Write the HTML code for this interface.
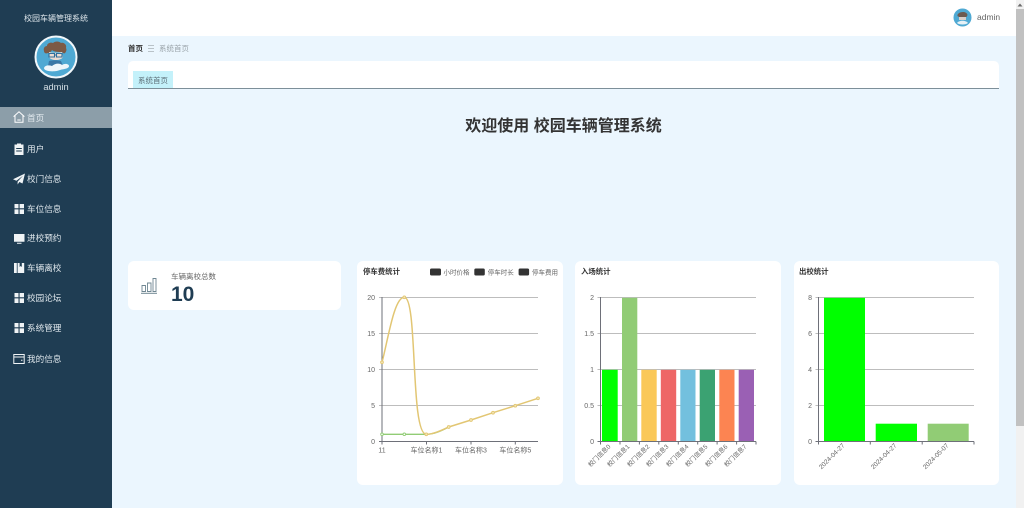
<!DOCTYPE html>
<html lang="zh">
<head>
<meta charset="utf-8">
<title>校园车辆管理系统</title>
<style>
html,body{margin:0;padding:0;width:1024px;height:508px;overflow:hidden;background:#ebf6fe;font-family:"Liberation Sans","Noto Sans CJK SC",sans-serif;}
body{filter:blur(.3px);}
div,span{position:absolute;white-space:nowrap;}
#side{left:0;top:0;width:112px;height:508px;background:#1f3d53;}
.m{left:27px;color:#dfe7ec;font-size:8.6px;line-height:12px;height:12px;}
.ic{position:absolute;left:13px;width:12px;height:12px;}
.card{background:#fff;border-radius:6px;}
.ct{font-size:7.4px;font-weight:bold;color:#333;line-height:10px;}
svg text{font-family:"Liberation Sans","Noto Sans CJK SC",sans-serif;fill:#666;font-size:7px;}
</style>
</head>
<body>
<div id="side">
  <div style="left:0;width:112px;top:13px;text-align:center;color:#dfe7ec;font-size:8px;line-height:11px;">校园车辆管理系统</div>
  <svg style="position:absolute;left:34px;top:35px" width="44" height="44" viewBox="0 0 44 44">
    <circle cx="22" cy="22" r="20.5" fill="#4fa9d3" stroke="#f2f7fa" stroke-width="2"/>
    <path d="M10 16c-1-3 1-5 3-5 0-3 4-4 6-3 2-2 6-2 8 0 3-1 6 2 5 5 1 2 0 4-1 5-1 1-2 0-3-1-4 0-8 0-10-2-1 2-3 3-4 3-2 1-4 0-4-2z" fill="#7c5a45"/>
    <path d="M15 17c3 1 10 1 13 0l1 5c-2 4-12 4-14 0z" fill="#ecdcd2"/>
    <path d="M15 18.500h5.500v3.500H15zM22.500 18.500H28v3.500h-5.500zM20.500 20h2" fill="none" stroke="#2f6f9c" stroke-width="1.100"/>
    <path d="M15 26c3-1 9-1 12 0l2 5H14z" fill="#3b78a6"/>
    <path d="M10 33c1-3 5-3 8-2 3-3 8-3 10-1 3-2 7-1 7 1 0 3-6 3-9 4-4 2-16 2-16-2z" fill="#eef6fa"/>
  </svg>
  <div style="left:0;width:112px;top:81px;text-align:center;color:#d5dfe5;font-size:9.300px;line-height:12px;">admin</div>

  <div style="left:0;top:107px;width:112px;height:21px;background:#8c9ea9;"></div>
  <svg class="ic" style="top:111px" viewBox="0 0 12 12"><path d="M.6 5.600 6 .8l5.400 4.800M2 4.600v6.700h8V4.600M4.300 9h3.400" fill="none" stroke="#fff" stroke-width="1"/></svg>
  <div class="m" style="top:112px;">首页</div>

  <svg class="ic" style="top:143px" viewBox="0 0 12 12"><path d="M1.500 1.500h2.500V.5h4v1h2.500V12h-9zM3.200 5h5.600v1H3.200zM3.200 7.500h5.600v1H3.200z" fill="#f0f4f6" fill-rule="evenodd"/></svg>
  <div class="m" style="top:143px;">用户</div>

  <svg class="ic" style="top:173px" viewBox="0 0 12 12"><path d="M12 .5 9.500 10.500 6.400 9 4.600 11.500V8.600L10 2.800 3.400 7.800 0 6.300z" fill="#f0f4f6"/></svg>
  <div class="m" style="top:173px;">校门信息</div>

  <svg class="ic" style="top:203px" viewBox="0 0 12 12"><path d="M1.500 1h4v4.300h-4zM6.600 1h4.400v4.300H6.600zM1.500 6.400h4V11h-4zM6.600 6.400h4.400V11H6.600z" fill="#f0f4f6"/></svg>
  <div class="m" style="top:203px;">车位信息</div>

  <svg class="ic" style="top:233px" viewBox="0 0 12 12"><path d="M1 1h10.500v7.700H1zM4 9.700h4.500v1H4z" fill="#f0f4f6"/></svg>
  <div class="m" style="top:232px;">进校预约</div>

  <svg class="ic" style="top:262px" viewBox="0 0 12 12"><path d="M1 1h2.800v10H1zM4.600 1h2v4l1.100-1 1.100 1V1h2.400v10H4.600z" fill="#f0f4f6"/></svg>
  <div class="m" style="top:262px;">车辆离校</div>

  <svg class="ic" style="top:292px" viewBox="0 0 12 12"><path d="M1.500 1h4v4.300h-4zM6.600 1h4.400v4.300H6.600zM1.500 6.400h4V11h-4zM6.600 6.400h4.400V11H6.600z" fill="#f0f4f6"/></svg>
  <div class="m" style="top:292px;">校园论坛</div>

  <svg class="ic" style="top:322px" viewBox="0 0 12 12"><path d="M1.500 1h4v4.300h-4zM6.600 1h4.400v4.300H6.600zM1.500 6.400h4V11h-4zM6.600 6.400h4.400V11H6.600z" fill="#f0f4f6"/></svg>
  <div class="m" style="top:322px;">系统管理</div>

  <svg class="ic" style="top:353px" viewBox="0 0 12 12"><path d="M.8 1.500h10.400v9H.8zM.8 4h10.400M8 7.200h1.500" fill="none" stroke="#f0f4f6" stroke-width="1"/></svg>
  <div class="m" style="top:353px;">我的信息</div>
</div>

<div style="left:112px;top:0;width:904px;height:36px;background:#fff;"></div>
<svg style="position:absolute;left:953px;top:8px" width="20" height="20" viewBox="0 0 20 20">
  <circle cx="9.500" cy="9.500" r="9" fill="#4fa9d3"/>
  <path d="M4.500 8c-1-4 9-6 10-1l-1 2H6z" fill="#6d5a50"/>
  <path d="M6 9h7v3H6z" fill="#d9cfc9"/>
  <path d="M4 15c2-3 9-3 11 0-2 2-9 2-11 0z" fill="#e6f1f6"/>
</svg>
<div style="left:977px;top:12px;font-size:8.500px;line-height:11px;color:#666;">admin</div>

<div style="left:128px;top:43px;font-size:7.500px;line-height:11px;font-weight:bold;color:#333;">首页</div>
<svg style="position:absolute;left:148px;top:45px" width="7" height="7"><path d="M0 .5h6M0 3.500h6M0 6.500h6" stroke="#b9c2c8" stroke-width="1"/></svg>
<div style="left:159px;top:43px;font-size:7.500px;line-height:11px;color:#9aa3a9;">系统首页</div>

<div style="left:128px;top:61px;width:871px;height:27px;background:#fff;border-radius:5px 5px 0 0;border-bottom:1px solid #7d8f99;"></div>
<div style="left:133px;top:71px;width:40px;height:17px;background:#c4f1fa;"></div>
<div style="left:138px;top:75px;font-size:7.500px;line-height:11px;color:#5d6f78;">系统首页</div>

<div style="left:128px;width:871px;top:116px;text-align:center;font-size:16px;line-height:22px;font-weight:bold;color:#333;">欢迎使用 校园车辆管理系统</div>

<div class="card" style="left:128px;top:261px;width:213px;height:49px;"></div>
<svg style="position:absolute;left:140px;top:276px" width="18" height="18" viewBox="0 0 18 18">
  <path d="M2 9.500h3.500v6H2zM7.500 7h3.500v8.500H7.500zM13 2.500h3v13h-3z" fill="none" stroke="#6f8792" stroke-width=".9"/>
  <path d="M1 17.300h16" stroke="#6f8792" stroke-width="1"/>
</svg>
<div style="left:171px;top:271px;font-size:7.500px;line-height:11px;color:#666;">车辆离校总数</div>
<div style="left:171px;top:282px;font-size:21px;line-height:25px;font-weight:bold;color:#1f3d53;">10</div>

<div class="card" style="left:357px;top:261px;width:206px;height:224px;"></div>
<div class="card" style="left:575px;top:261px;width:206px;height:224px;"></div>
<div class="card" style="left:794px;top:261px;width:205px;height:224px;"></div>

<div class="ct" style="left:363px;top:267px;">停车费统计</div>
<div class="ct" style="left:581px;top:267px;">入场统计</div>
<div class="ct" style="left:799px;top:267px;">出校统计</div>

<svg style="position:absolute;left:0;top:0" width="1024" height="508" viewBox="0 0 1024 508">
  <!-- legend -->
  <rect x="430" y="268.500" width="11" height="7" rx="1.500" fill="#333"/>
  <rect x="474.300" y="268.500" width="10.500" height="7" rx="1.500" fill="#333"/>
  <rect x="518.600" y="268.500" width="10.500" height="7" rx="1.500" fill="#333"/>
  <text x="443.500" y="274.500" style="font-size:6.500px">小时价格</text>
  <text x="487.700" y="274.500" style="font-size:6.500px">停车时长</text>
  <text x="532" y="274.500" style="font-size:6.500px">停车费用</text>

  <!-- chart 1 -->
  <g stroke="#bdbdbd" stroke-width="1">
    <path d="M379 297.500h159M379 333.500h159M379 369.500h159M379 405.500h159"/>
  </g>
  <path d="M382 297v145M379 441.500h159M426.500 441.500v3M471 441.500v3M515.300 441.500v3M382 441.500v3" stroke="#6e7079" stroke-width="1" fill="none"/>
  <g text-anchor="end">
    <text x="375" y="300">20</text><text x="375" y="336">15</text><text x="375" y="372">10</text><text x="375" y="408">5</text><text x="375" y="444">0</text>
  </g>
  <g text-anchor="middle">
    <text x="382" y="452.500">11</text><text x="426.500" y="452.500">车位名称1</text><text x="471" y="452.500">车位名称3</text><text x="515.300" y="452.500">车位名称5</text>
  </g>
  <path d="M382 434.300H426.300C434 434.300 441 431 448.700 427" fill="none" stroke="#91cc75" stroke-width="1.300"/>
  <g fill="#fff" stroke="#91cc75" stroke-width=".9"><circle cx="382" cy="434.300" r="1.300"/><circle cx="404.300" cy="434.300" r="1.300"/></g>
  <path d="M382 362.300C388 340 394 297.300 404.300 297.300C418 297.300 410 434.300 426.300 434.300C433 434.300 441 430.500 448.700 427L471 420 493 412.700 515.300 405.700 538 398.300" fill="none" stroke="#e2c673" stroke-width="1.500"/>
  <g fill="#f4e7b5" stroke="#e2c673" stroke-width=".9">
    <circle cx="382" cy="362.300" r="1.400"/><circle cx="404.300" cy="297.300" r="1.400"/><circle cx="426.300" cy="434.300" r="1.400"/><circle cx="448.700" cy="427" r="1.400"/><circle cx="471" cy="420" r="1.400"/><circle cx="493" cy="412.700" r="1.400"/><circle cx="515.300" cy="405.700" r="1.400"/><circle cx="538" cy="398.300" r="1.400"/>
  </g>

  <!-- chart 2 -->
  <path d="M597.500 297.500H756M597.500 333.500H756M597.500 369.500H756M597.500 405.500H756" stroke="#bdbdbd" stroke-width="1"/>
  <rect x="602" y="369.800" width="15.700" height="71.700" fill="#00ff00"/>
  <rect x="622" y="297.800" width="15.300" height="143.700" fill="#91cc75"/>
  <rect x="641.300" y="369.800" width="15.400" height="71.700" fill="#fac858"/>
  <rect x="660.800" y="369.800" width="15.400" height="71.700" fill="#ee6666"/>
  <rect x="680.300" y="369.800" width="15.200" height="71.700" fill="#73c0de"/>
  <rect x="699.700" y="369.800" width="15.300" height="71.700" fill="#3ba272"/>
  <rect x="719.300" y="369.800" width="15.200" height="71.700" fill="#fc8452"/>
  <rect x="738.700" y="369.800" width="15.300" height="71.700" fill="#9a60b4"/>
  <path d="M600.500 297v145M597.500 441.500H756" stroke="#6e7079" stroke-width="1" fill="none"/>
  <path d="M600.500 441.500v3M620 441.500v3M639.400 441.500v3M658.800 441.500v3M678.300 441.500v3M697.700 441.500v3M717.100 441.500v3M736.600 441.500v3M756 441.500v3" stroke="#6e7079" stroke-width="1"/>
  <g text-anchor="end">
    <text x="594" y="300">2</text><text x="594" y="336">1.5</text><text x="594" y="372">1</text><text x="594" y="408">0.5</text><text x="594" y="444">0</text>
  </g>
  <g text-anchor="end" style="font-size:6.300px">
    <text style="font-size:6.300px" transform="translate(611 447) rotate(-45)">校门信息0</text>
    <text style="font-size:6.300px" transform="translate(630 447) rotate(-45)">校门信息1</text>
    <text style="font-size:6.300px" transform="translate(650 447) rotate(-45)">校门信息2</text>
    <text style="font-size:6.300px" transform="translate(669 447) rotate(-45)">校门信息3</text>
    <text style="font-size:6.300px" transform="translate(689 447) rotate(-45)">校门信息4</text>
    <text style="font-size:6.300px" transform="translate(708 447) rotate(-45)">校门信息5</text>
    <text style="font-size:6.300px" transform="translate(728 447) rotate(-45)">校门信息6</text>
    <text style="font-size:6.300px" transform="translate(747 447) rotate(-45)">校门信息7</text>
  </g>

  <!-- chart 3 -->
  <path d="M815.500 297.500H974M815.500 333.500H974M815.500 369.500H974M815.500 405.500H974" stroke="#bdbdbd" stroke-width="1"/>
  <rect x="824" y="297.800" width="41" height="143.700" fill="#00ff00"/>
  <rect x="875.700" y="423.700" width="41.300" height="17.800" fill="#00ff00"/>
  <rect x="927.700" y="423.700" width="41" height="17.800" fill="#91cc75"/>
  <path d="M818.500 297v145M815.500 441.500H974" stroke="#6e7079" stroke-width="1" fill="none"/>
  <path d="M818.500 441.500v3M870.300 441.500v3M922.200 441.500v3M974 441.500v3" stroke="#6e7079" stroke-width="1"/>
  <g text-anchor="end">
    <text x="812" y="300">8</text><text x="812" y="336">6</text><text x="812" y="372">4</text><text x="812" y="408">2</text><text x="812" y="444">0</text>
  </g>
  <g text-anchor="end">
    <text style="font-size:6.500px" transform="translate(845 446) rotate(-45)">2024-04-27</text>
    <text style="font-size:6.500px" transform="translate(897 446) rotate(-45)">2024-04-27</text>
    <text style="font-size:6.500px" transform="translate(949 446) rotate(-45)">2024-05-07</text>
  </g>
</svg>

<!-- scrollbar -->
<div style="left:1016px;top:0;width:8px;height:508px;background:#f1f1f1;"></div>
<div style="left:1016px;top:9px;width:8px;height:417px;background:#c1c1c1;"></div>
<svg style="position:absolute;left:1016px;top:2px" width="8" height="6"><path d="M4 1.500 6.500 4.500h-5z" fill="#6b6b6b"/></svg>
</body>
</html>
